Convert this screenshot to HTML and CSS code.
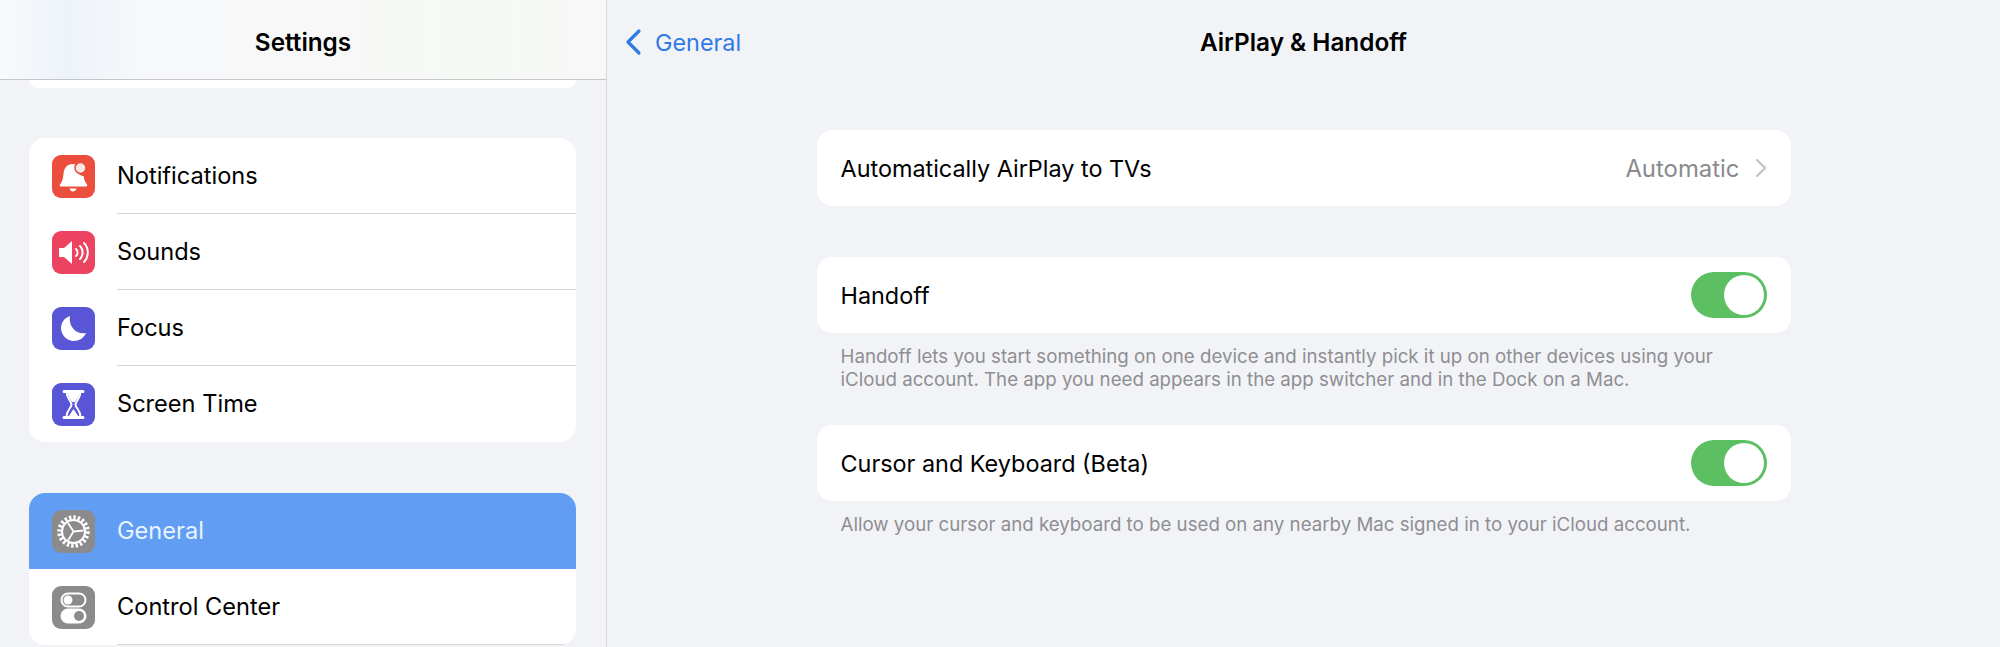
FILE: index.html
```html
<!DOCTYPE html>
<html lang="en">
<head>
  <meta charset="UTF-8">
  <title>AirPlay &amp; Handoff</title>
  <link rel="stylesheet" href="styles.css">
</head>
<body>
  <div class="sidebar">
    <div class="side-header">Settings</div>
    <div class="side-stub"></div>

    <div class="group first-group">
      <div class="row">
        <div class="icon red">
          <svg viewBox="0 0 43 43"><path d="M21 9c-6 0-9 4-9.500 10-.4 5-1.500 8-3.500 10.500-.6 1-.2 2 1 2h25c1.200 0 1.600-1 1-2-2-2.500-3-5.500-3.400-8.500-5-.5-8-4-7.600-10.500-.7-1-1.500-1.500-2.500-1.500z" fill="#fff"/><path d="M17.500 33.500h7c-.5 2-2 3-3.500 3s-3-1-3.500-3z" fill="#fff"/><circle cx="28.500" cy="13" r="5.500" fill="#fbe9e6" stroke="#eb4e3d" stroke-width="1.500"/></svg>
        </div>
        <div class="row-label">Notifications</div>
      </div>
      <div class="row">
        <div class="icon pink">
          <svg viewBox="0 0 43 43"><path d="M7 17h5l8-7v23l-8-7H7z" fill="#fff"/><path d="M24 18c2 2 2 5 0 7M28 15c3.500 3.500 3.500 9.500 0 13M32 12c5 5 5 14 0 19" fill="none" stroke="#fff" stroke-width="2" stroke-linecap="round"/></svg>
        </div>
        <div class="row-label">Sounds</div>
      </div>
      <div class="row">
        <div class="icon indigo">
          <svg viewBox="0 0 43 43"><path d="M18 9c-6 2-9 7-9 12 0 7 6 13 13 13 5 0 10-3 12-8-9 2-18-6-16-17z" fill="#fff"/></svg>
        </div>
        <div class="row-label">Focus</div>
      </div>
      <div class="row">
        <div class="icon indigo">
          <svg viewBox="0 0 43 43"><path d="M12 8.500h19M12 34.500h19" stroke="#fff" stroke-width="3" stroke-linecap="round"/><path d="M14.500 9c0 7 5 9 5 12.500s-5 5.500-5 12.500h14c0-7-5-9-5-12.500s5-5.500 5-12.500z" fill="none" stroke="#fff" stroke-width="2"/><path d="M15.500 10h12c-.5 4-3 6-4.500 9h-3c-1.500-3-4-5-4.500-9z" fill="#fff"/><path d="M21.500 26l5 7.500h-10z" fill="#fff"/></svg>
        </div>
        <div class="row-label">Screen Time</div>
      </div>
    </div>

    <div class="group">
      <div class="row selected">
        <div class="icon gray">
          <svg viewBox="0 0 43 43"><circle cx="21.500" cy="21.500" r="14" fill="none" stroke="#fff" stroke-width="4.500" stroke-dasharray="2.400 1.960"/><circle cx="21.500" cy="21.500" r="11.500" fill="none" stroke="#fff" stroke-width="2"/><path d="M21.500 21.500l10-1M21.500 21.500l-5.500 9M21.500 21.500l-5.500-8.500" stroke="#fff" stroke-width="1.800"/></svg>
        </div>
        <div class="row-label">General</div>
      </div>
      <div class="row">
        <div class="icon gray">
          <svg viewBox="0 0 43 43"><rect x="9.500" y="7.500" width="24" height="13" rx="6.500" fill="none" stroke="#fff" stroke-width="2"/><circle cx="16" cy="14" r="4.500" fill="#fff"/><rect x="8.500" y="22.500" width="26" height="15" rx="7.500" fill="#fff"/><circle cx="27" cy="30" r="5" fill="#8b8b8d"/></svg>
        </div>
        <div class="row-label">Control Center</div>
      </div>
    </div>
  </div>

  <div class="detail">
    <div class="detail-header">
      <div class="back">
        <svg width="18" height="28" viewBox="0 0 18 28"><path d="M15 3L4 14l11 11" fill="none" stroke="#2f7ae5" stroke-width="3.200" stroke-linecap="round" stroke-linejoin="round"/></svg>
        <span>General</span>
      </div>
      <div class="detail-title">AirPlay &amp; Handoff</div>
    </div>

    <div class="content">
      <div class="card airplay-card">
        <div>Automatically AirPlay to TVs</div>
        <div class="value">
          <span>Automatic</span>
          <svg width="12" height="20" viewBox="0 0 12 20"><path d="M2 2l8 8-8 8" fill="none" stroke="#c4c4c7" stroke-width="2.400" stroke-linecap="round" stroke-linejoin="round"/></svg>
        </div>
      </div>

      <div class="card">
        <div>Handoff</div>
        <div class="toggle"><div class="knob"></div></div>
      </div>
      <p class="note">Handoff lets you start something on one device and instantly pick it up on other devices using your<br>iCloud account. The app you need appears in the app switcher and in the Dock on a Mac.</p>

      <div class="card">
        <div>Cursor and Keyboard (Beta)</div>
        <div class="toggle"><div class="knob"></div></div>
      </div>
      <p class="note">Allow your cursor and keyboard to be used on any nearby Mac signed in to your iCloud account.</p>
    </div>
  </div>
</body>
</html>
```
FILE: styles.css
```css
html, body {
  height: 100%;
}

body {
  margin: 0;
  display: flex;
  height: 647px;
  overflow: hidden;
  background-color: #f2f3f7;
  color: #000;
  font-family: 'Inter', 'Liberation Sans', sans-serif;
  font-size: 23.4px;
}

/* Left column */
.sidebar {
  width: 606px;
  flex-shrink: 0;
  border-right: 1px solid #d8d8dc;
  overflow: hidden;
}

.side-header {
  height: 80px;
  padding-top: 4px;
  box-sizing: border-box;
  display: flex;
  justify-content: center;
  align-items: center;
  border-bottom: 1px solid #c6c6c8;
  background: linear-gradient(90deg, #f8fafb 0, #edf3fa 65px, #f6f8fa 140px, #f8f8f8 300px, #f5f9f4 480px, #f8f8f8 100%);
  font-size: 24.3px;
  font-weight: 600;
}

.side-stub {
  height: 8px;
  margin: 0 30px 0 29px;
  background-color: #fff;
  border-radius: 0 0 13px 13px;
}

.group {
  margin: 51px 30px 0 29px;
  background-color: #fff;
  border-radius: 16px;
  overflow: hidden;
}

.side-stub + .group {
  margin-top: 50px;
}

.row {
  height: 76px;
  display: flex;
  align-items: center;
  padding-left: 23px;
  gap: 22px;
  font-size: 23.6px;
}

.row-label {
  flex: 1;
  height: 76px;
  line-height: 76px;
  box-sizing: border-box;
  border-bottom: 1px solid #d6d6d9;
}

.first-group .row:last-child .row-label,
.selected .row-label {
  border-bottom: none;
}

.selected {
  background-color: #619df3;
  color: #e8f4ff;
}

.icon {
  width: 43px;
  height: 43px;
  border-radius: 9px;
  flex-shrink: 0;
}

.icon svg {
  display: block;
  width: 43px;
  height: 43px;
}

.red { background-color: #eb4e3d; }
.pink { background-color: #eb4360; }
.indigo { background-color: #5856d6; }
.gray { background-color: #8b8b8d; }

/* Right column */
.detail {
  flex: 1;
}

.detail-header {
  height: 80px;
  padding-top: 4px;
  box-sizing: border-box;
  display: flex;
  justify-content: center;
  align-items: center;
  position: relative;
}

.back {
  position: absolute;
  left: 17px;
  top: 0;
  height: 84px;
  display: flex;
  align-items: center;
  gap: 13px;
  color: #2f7ae5;
}

.detail-title {
  font-size: 24.3px;
  font-weight: 600;
}

.content {
  width: 974px;
  margin: 50px auto 0;
}

.card {
  height: 76px;
  display: flex;
  justify-content: space-between;
  align-items: center;
  padding: 0 24px;
  background-color: #fff;
  border-radius: 15px;
}

.airplay-card {
  margin-bottom: 51px;
}

.value {
  display: flex;
  align-items: center;
  gap: 15px;
  font-size: 23.9px;
  color: #8a8a8e;
}

.toggle {
  width: 76px;
  height: 46px;
  border-radius: 23px;
  background-color: #5cbf62;
  position: relative;
}

.knob {
  position: absolute;
  right: 3px;
  top: 3px;
  width: 40px;
  height: 40px;
  border-radius: 50%;
  background-color: #fff;
}

.note {
  margin: 12px 24px 34px;
  font-size: 18.7px;
  line-height: 23px;
  color: #8e8e93;
}
```
